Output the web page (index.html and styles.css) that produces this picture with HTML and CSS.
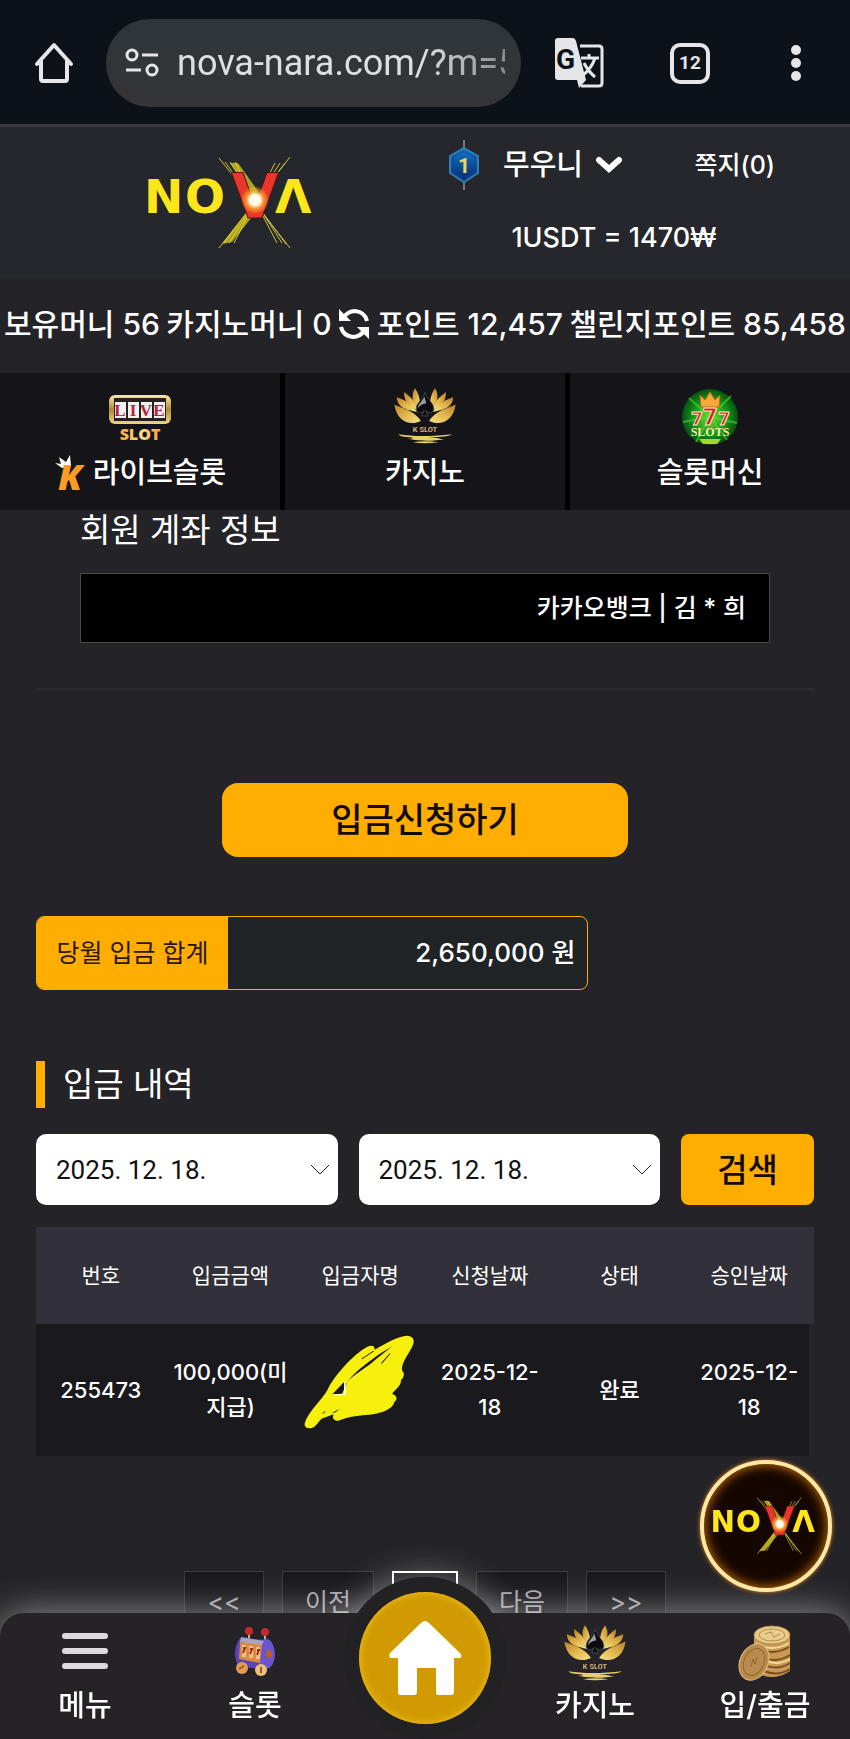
FILE: index.html
```html
<!DOCTYPE html>
<html lang="ko">
<head>
  <meta charset="UTF-8" />
  <meta name="viewport" content="width=device-width, initial-scale=1" />
  <title>NOVA</title>
  <link rel="stylesheet" href="styles.css">
</head>
<body>
  <!-- shared drawings -->
  <svg class="defs" aria-hidden="true">
    <defs>
      <linearGradient id="gold" x1="0" y1="0" x2="1" y2="1">
        <stop offset="0" stop-color="#b9822a" />
        <stop offset="0.5" stop-color="#e3b64c" />
        <stop offset="1" stop-color="#f3e58a" />
      </linearGradient>
      <linearGradient id="goldDown" x1="0" y1="0" x2="0" y2="1">
        <stop offset="0" stop-color="#f8eaa6" />
        <stop offset="0.5" stop-color="#b08a35" />
        <stop offset="1" stop-color="#f0d77c" />
      </linearGradient>
      <linearGradient id="orange" x1="0" y1="0" x2="1" y2="0">
        <stop offset="0" stop-color="#f7a13c" />
        <stop offset="0.5" stop-color="#fbe08a" />
        <stop offset="1" stop-color="#f7a13c" />
      </linearGradient>
      <radialGradient id="spark">
        <stop offset="0" stop-color="#fff" />
        <stop offset="0.4" stop-color="#fff6d8" />
        <stop offset="0.65" stop-color="#ffb02e" stop-opacity="0.7" />
        <stop offset="1" stop-color="#ffd21f" stop-opacity="0" />
      </radialGradient>
      <radialGradient id="green">
        <stop offset="0" stop-color="#7be02b" />
        <stop offset="0.6" stop-color="#139a1c" />
        <stop offset="1" stop-color="#05520f" />
      </radialGradient>
      <linearGradient id="blue" x1="0" y1="0" x2="0" y2="1">
        <stop offset="0" stop-color="#1479c9" />
        <stop offset="1" stop-color="#07256b" />
      </linearGradient>
      <g id="petals" fill="url(#gold)">
        <path d="M1 48C20 58 62 66 80 97C48 112 8 100 1 48Z" />
        <path d="M8 26C42 36 62 54 68 70C42 62 12 62 8 26Z" />
        <path d="M30 11C56 30 68 48 71 66C50 54 28 42 30 11Z" />
        <path d="M62 0C78 22 80 48 74 66C56 46 48 24 62 0Z" />
      </g>
    </defs>
    <symbol id="logo" viewBox="0 0 170 92">
      <g stroke="#c9c53a" stroke-width="1" fill="none">
        <path d="M71 1L142 91M77 5L138 87M82 5L134 86M87 5L129 86" />
        <path d="M142 0L71 91M137 6L76 86M132 6L81 86M127 6L86 86" />
      </g>
      <path d="M99 56L74 87L84 85L104 60M82 6L104 38L110 34L90 6" fill="#e8d71f" opacity="0.7" />
      <g class="logo-text" fill="#fbe61c">
        <text x="-4" y="56">N</text>
        <text x="37" y="56">O</text>
        <text x="127" y="56">Λ</text>
      </g>
      <text class="logo-v" x="107" y="61" text-anchor="middle" fill="#e9352c" stroke="#471512" stroke-width="1">V</text>
      <circle cx="107" cy="43" r="14" fill="url(#spark)" />
    </symbol>
    <symbol id="lotus" viewBox="0 0 184 164">
      <use href="#petals" />
      <use href="#petals" transform="matrix(-1 0 0 1 184 0)" />
      <path d="M92 12C84 36 66 42 66 60C66 74 82 76 89 66L83 82H101L95 66C102 76 118 74 118 60C118 42 100 36 92 12Z" fill="#0c0c10" stroke="#55555c" stroke-width="2" />
      <path d="M90 24C84 38 72 46 71 58C78 48 88 46 96 44Z" fill="#9a9aa4" />
      <text x="92" y="129" font-family="Roboto" font-size="22" font-weight="bold" text-anchor="middle" fill="#d9b37c">K SLOT</text>
      <path d="M13 136C60 144 120 142 172 136C160 146 120 142 100 147C132 144 140 152 150 150C120 158 60 156 40 149C60 150 62 146 40 144C26 144 18 142 13 136Z" fill="#e8cf6a" />
      <path d="M56 160Q92 154 132 160Q92 166 56 160Z" fill="#e8cf6a" />
    </symbol>
  </svg>

  <div class="browser">
    <button class="icon-btn" aria-label="Home">
      <svg width="40" height="42" viewBox="0 0 40 42" fill="none" stroke="#e4e6ea" stroke-width="4" stroke-linejoin="round" stroke-linecap="round">
        <path d="M3 22L20 3L37 22M7 19V37Q7 39 9 39H31Q33 39 33 37V19" />
      </svg>
    </button>
    <div class="url">
      <svg width="34" height="30" viewBox="0 0 34 30" fill="none" stroke="#e4e6ea" stroke-width="3">
        <circle cx="7" cy="7" r="5" /><path d="M17 7H33M1 22H16" /><circle cx="27" cy="22" r="5" />
      </svg>
      <span class="address">nova-nara.com/?m=5</span>
    </div>
    <div class="actions">
      <button class="icon-btn" aria-label="Translate">
        <svg width="50" height="52" viewBox="0 0 50 52">
          <path d="M26 9H45Q48 9 48 12V46Q48 49 45 49H27" fill="none" stroke="#e4e6ea" stroke-width="3" />
          <path d="M4 1H19Q21 1 22 4L32 43L25 51L23 43H4Q1 43 1 40V4Q1 1 4 1Z" fill="#e4e6ea" />
          <text x="2" y="32" font-family="Roboto" font-size="28" font-weight="bold" fill="#0d1118">G</text>
          <path d="M27 21H45M35 17V21M41 21Q38 31 28 39M30 26Q34 34 41 40" fill="none" stroke="#e4e6ea" stroke-width="3" />
        </svg>
      </button>
      <button class="tabs-count" aria-label="Tabs">12</button>
      <button class="icon-btn more" aria-label="More">
        <svg width="12" height="38" viewBox="0 0 12 38" fill="#e4e6ea">
          <circle cx="6" cy="6" r="5" /><circle cx="6" cy="19" r="5" /><circle cx="6" cy="32" r="5" />
        </svg>
      </button>
    </div>
  </div>

  <header class="top">
    <a class="brand" href="#" aria-label="NOVA">
      <svg width="170" height="92"><use href="#logo" /></svg>
    </a>
    <div class="account">
      <div class="account-row">
        <button class="user">
          <svg width="30" height="50" viewBox="0 0 30 50">
            <path d="M15 0V50" stroke="#77797e" stroke-width="2" />
            <path d="M15 8L29 16V33L15 42L1 33V16Z" fill="url(#blue)" stroke="#2c7fae" stroke-width="2" />
            <path d="M15 11L26 17V32L15 39L4 32V17Z" fill="none" stroke="#0a4da0" stroke-width="1" />
            <text x="15" y="33" font-family="Roboto" font-size="21" font-weight="bold" text-anchor="middle" fill="#f1d75c">1</text>
          </svg>
          <span>무우니</span>
          <svg width="28" height="18" viewBox="0 0 28 18" fill="none" stroke="#fff" stroke-width="6" stroke-linecap="round"><path d="M4 4L14 13L24 4" /></svg>
        </button>
        <a class="memo" href="#">쪽지(0)</a>
      </div>
      <div class="rate">1USDT = 1470₩</div>
    </div>
  </header>

  <div class="money">
    <span>보유머니 56</span>
    <span>카지노머니 0</span>
    <button class="icon-btn" aria-label="새로고침">
      <svg width="32" height="32" viewBox="0 0 32 32">
        <path d="M5 10Q10 3 17 3Q27 4 29 13M27 22Q22 29 15 29Q5 28 3 19" fill="none" stroke="#fff" stroke-width="4" />
        <path d="M1 1V13H13Z M31 31V19H19Z" fill="#fff" />
      </svg>
    </button>
    <span>포인트 12,457</span>
    <span>챌린지포인트 85,458</span>
  </div>

  <nav class="games">
    <a href="#">
      <svg width="64" height="56" viewBox="0 0 64 56">
        <rect x="1" y="7" width="62" height="29" rx="6" fill="url(#goldDown)" />
        <rect x="6" y="10" width="52" height="23" fill="#26211d" />
        <path d="M7 14H18V30H7ZM20 14H31V30H20ZM33 14H44V30H33ZM46 14H57V30H46Z" fill="#f4eef0" />
        <g font-family="Liberation Serif" font-size="17" font-weight="bold" text-anchor="middle" fill="#b3203f">
          <text x="12" y="28">L</text><text x="25" y="28">I</text><text x="38" y="28">V</text><text x="51" y="28">E</text>
        </g>
        <text x="32" y="52" font-family="Open Sans" font-size="16" font-weight="800" text-anchor="middle" fill="url(#orange)">SLOT</text>
      </svg>
      <span class="label">
        <svg width="36" height="38" viewBox="0 0 36 38">
          <path d="M8 14L1 9L7 10L5 3L12 8L16 1L17 12Z" fill="#fff" />
          <text x="4" y="36" font-family="Open Sans" font-size="36" font-weight="800" font-style="italic" fill="#fb9b24">K</text>
        </svg>
        라이브슬롯
      </span>
    </a>
    <a href="#">
      <svg width="62" height="56"><use href="#lotus" /></svg>
      <span class="label">카지노</span>
    </a>
    <a href="#">
      <svg width="58" height="58" viewBox="0 0 58 58">
        <circle cx="29" cy="29" r="28" fill="url(#green)" />
        <path d="M29 29L8 10M29 29L50 8M29 29L2 34M29 29L56 35M29 29L15 54M29 29L46 52" stroke="#5ad03a" stroke-width="2" opacity="0.6" />
        <path d="M20 19L19 7L24 12L29 4L34 12L39 7L38 19Z" fill="#f4a93a" stroke="#c46a12" />
        <g font-family="Roboto" font-weight="900" text-anchor="middle" fill="#d8161c" stroke="#fbe7c0">
          <text x="16" y="37" font-size="19">7</text><text x="43" y="37" font-size="19">7</text><text x="29" y="37" font-size="24">7</text>
        </g>
        <text x="29" y="48" font-family="Liberation Serif" font-size="12" font-weight="bold" text-anchor="middle" fill="#ffe9a6">SLOTS</text>
        <path d="M18 51H40L36 56H22Z" fill="#a7d62a" />
      </svg>
      <span class="label">슬롯머신</span>
    </a>
  </nav>

  <main>
    <section class="bank">
      <label for="bank">회원 계좌 정보</label>
      <input id="bank" type="text" value="카카오뱅크 | 김 * 희" readonly>
    </section>

    <button class="apply">입금신청하기</button>

    <div class="sum">
      <span class="sum-label">당월 입금 합계</span>
      <span class="sum-value">2,650,000 원</span>
    </div>

    <h2>입금 내역</h2>

    <form class="search">
      <div class="date">
        <select aria-label="시작일"><option>2025. 12. 18.</option></select>
        <svg width="20" height="12" viewBox="0 0 20 12" fill="none" stroke="#222" stroke-width="1"><path d="M1 1L10 10L19 1" /></svg>
      </div>
      <div class="date">
        <select aria-label="종료일"><option>2025. 12. 18.</option></select>
        <svg width="20" height="12" viewBox="0 0 20 12" fill="none" stroke="#222" stroke-width="1"><path d="M1 1L10 10L19 1" /></svg>
      </div>
      <button type="button">검색</button>
    </form>

    <table>
      <thead>
        <tr><th>번호</th><th>입금금액</th><th>입금자명</th><th>신청날짜</th><th>상태</th><th>승인날짜</th></tr>
      </thead>
      <tbody>
        <tr>
          <td>255473</td>
          <td>100,000(미지급)</td>
          <td class="masked">
            <svg viewBox="560 374 206 282" preserveAspectRatio="none">
              <path d="M563 640C570 600 600 560 606 535C620 490 660 420 682 407Q692 404 692 418C720 390 740 376 752 376Q766 378 763 400C758 425 740 455 742 480Q750 495 740 510C742 525 728 540 724 550Q738 560 728 575C724 600 700 612 670 615C650 618 635 625 624 632Q612 630 616 612L594 625C586 640 580 655 572 654Q562 652 563 640Z" fill="#f7f00c" />
              <path d="M641 515C655 490 680 470 692 450L724 408L700 432C680 455 655 485 641 515ZM628 595L613 608L620 606Z" fill="#1b191d" />
              <path d="M614 552L636 514L640 520L632 550Z" fill="#1b191d" />
              <path d="M668 446L690 422M704 460L720 430M596 610L601 603" stroke="#1b191d" stroke-width="2" />
              <path d="M637 515V553M616 553H637" stroke="#fff" stroke-width="3" fill="none" />
            </svg>
          </td>
          <td>2025-12-18</td>
          <td>완료</td>
          <td>2025-12-18</td>
        </tr>
      </tbody>
    </table>

    <div class="pages">
      <button class="end">&lt;&lt;</button>
      <button>이전</button>
      <button class="current" aria-label="1"></button>
      <button>다음</button>
      <button class="end">&gt;&gt;</button>
    </div>
  </main>

  <a class="float" href="#" aria-label="NOVA">
    <svg width="106" height="58"><use href="#logo" /></svg>
  </a>

  <nav class="bottom">
    <a href="#">
      <svg width="46" height="56" viewBox="0 0 46 56" stroke="#dcd8e0" stroke-width="6" stroke-linecap="round"><path d="M3 11H43M3 26H43M3 41H43" /></svg>
      메뉴
    </a>
    <a href="#">
      <svg width="42" height="56" viewBox="0 0 42 56">
        <path d="M15 8V16M31 9V17" stroke="#b8b0b8" stroke-width="2" />
        <circle cx="15" cy="6" r="4" fill="#c22a2e" /><circle cx="31" cy="7" r="4" fill="#c22a2e" />
        <path d="M6 13Q1 20 1 30Q2 38 5 42L30 44L32 15Z" fill="#5a45b4" />
        <ellipse cx="32" cy="29" rx="9" ry="15" fill="#6a56cc" />
        <path d="M7 12L30 16L27 21L6 17Z" fill="#a8a4c4" />
        <path d="M6 17L28 20L26 38L5 34Z" fill="#d98a45" />
        <path d="M8 20H12V32H8ZM15 21H19V33H15ZM22 22H26V34H22Z" fill="#f1bf85" />
        <path d="M9 23H11L9 28M16 24H18L16 29M23 25H25L23 30" fill="none" stroke="#a02c1c" stroke-width="2" />
        <ellipse cx="35" cy="29" rx="3" ry="4" fill="#b5602c" />
        <circle cx="8" cy="43" r="6" fill="#e79a58" /><circle cx="27" cy="45" r="6" fill="#edc07a" />
        <path d="M5 44L10 41M27 42V48" stroke="#9a5a24" stroke-width="2" />
      </svg>
      슬롯
    </a>
    <a class="home" href="#" aria-label="홈">
      <span class="home-circle">
        <svg width="74" height="76" viewBox="0 0 74 76" fill="#fff">
          <path d="M37 1Q39 1 41 3L72 33Q75 37 72 38H66V72Q66 75 63 75H50Q48 75 48 72V48H29V72Q29 75 26 75H12Q10 75 10 72V38H3Q0 37 2 33L33 3Q35 1 37 1Z" />
        </svg>
      </span>
    </a>
    <a href="#">
      <svg width="62" height="56"><use href="#lotus" /></svg>
      카지노
    </a>
    <a href="#">
      <svg width="54" height="56" viewBox="0 0 54 56">
        <path d="M16 10V46Q34 58 52 46V12Z" fill="#c89a55" />
        <path d="M18 22Q34 32 51 22M20 30Q36 40 52 30M22 38Q38 47 52 38M26 46Q40 52 52 44" fill="none" stroke="#7a4d22" stroke-width="2" />
        <path d="M18 18Q34 28 51 18M26 34Q38 42 52 34" fill="none" stroke="#f2dc9b" stroke-width="2" />
        <ellipse cx="34" cy="10" rx="18" ry="9" fill="#e9cd8c" stroke="#b58a48" />
        <ellipse cx="34" cy="10" rx="13" ry="6" fill="none" stroke="#b58a48" />
        <path d="M27 9L33 7L36 12L42 9" fill="none" stroke="#b58a48" />
        <ellipse cx="16" cy="37" rx="14" ry="19" transform="rotate(25 16 37)" fill="#b98b4c" stroke="#e0bd7c" />
        <ellipse cx="16" cy="37" rx="10" ry="14" transform="rotate(25 16 37)" fill="none" stroke="#94672f" />
        <path d="M13 42L15 34L17 39L19 32" fill="none" stroke="#94672f" />
      </svg>
      입/출금
    </a>
  </nav>
</body>
</html>
```

FILE: styles.css
```css
* {
  box-sizing: border-box;
}
body {
  margin: 0;
  min-height: 100vh;
  background-color: #242327;
  color: #fff;
  font-family: Inter, "Noto Sans CJK KR", sans-serif;
  font-size: 29px;
  font-weight: 500;
  line-height: 36px;
}
a {
  color: inherit;
  text-decoration: none;
}
button, input, select {
  font: inherit;
  color: inherit;
  border: none;
  padding: 0;
  margin: 0;
}
button {
  background: none;
  cursor: pointer;
}
svg {
  display: block;
  flex: none;
}
.defs {
  position: absolute;
  width: 0;
  height: 0;
}
.logo-text {
  font-family: "DejaVu Sans", Inter, sans-serif;
  font-size: 47px;
  font-weight: bold;
}
.logo-v {
  font-family: "DejaVu Sans", Inter, sans-serif;
  font-size: 62px;
  font-weight: bold;
}

/* browser bar */
.browser {
  display: flex;
  align-items: center;
  height: 127px;
  padding: 2px 34px 0;
  background-color: #0d1118;
  border-bottom: 3px solid #3a3c42;
}
.url {
  display: flex;
  align-items: center;
  gap: 18px;
  flex: 1;
  min-width: 0;
  height: 88px;
  margin: 0 33px 0 32px;
  padding: 0 16px 0 19px;
  border-radius: 44px;
  background: linear-gradient(#2e3639, #343438);
}
.address {
  flex: 1;
  overflow: hidden;
  white-space: nowrap;
  font-family: Roboto, sans-serif;
  font-size: 36px;
  font-weight: normal;
  line-height: 44px;
  color: #dde0e3;
  -webkit-mask-image: linear-gradient(to right, #000 75%, rgba(0, 0, 0, 0.5));
  mask-image: linear-gradient(to right, #000 75%, rgba(0, 0, 0, 0.5));
}
.actions {
  display: flex;
  align-items: center;
  gap: 66px;
}
.more {
  display: flex;
  justify-content: center;
  width: 40px;
}
.tabs-count {
  width: 40px;
  height: 41px;
  border: 4px solid #e4e6ea;
  border-radius: 10px;
  color: #e4e6ea;
  font-family: Roboto, sans-serif;
  font-size: 19px;
  font-weight: bold;
  line-height: 20px;
}

/* site header */
.top {
  display: flex;
  height: 152px;
  background-color: #26272c;
}
.brand {
  width: 50%;
  padding: 30px 0 0 148px;
}
.account {
  width: 50%;
  padding-top: 13px;
}
.account-row {
  display: flex;
  align-items: center;
  justify-content: space-between;
  padding: 0 75px 0 24px;
}
.user {
  display: flex;
  align-items: center;
}
.user span {
  margin: 0 12px 0 24px;
}
.memo {
  font-size: 25px;
}
.rate {
  margin-top: 30px;
  padding-right: 47px;
  text-align: center;
  font-size: 27px;
  line-height: 36px;
}
.money {
  display: flex;
  align-items: center;
  justify-content: space-between;
  height: 94px;
  padding: 0 4px 4px;
  font-size: 30px;
  white-space: nowrap;
}
.games {
  display: grid;
  grid-template-columns: repeat(3, 1fr);
  gap: 5px;
  height: 137px;
  background-color: #000;
}
.games a {
  display: flex;
  flex-direction: column;
  align-items: center;
  justify-content: space-between;
  padding: 15px 0 18px;
  background-color: #151418;
}
.label {
  display: flex;
  align-items: center;
  gap: 3px;
  height: 38px;
}

/* deposit page */
main {
  padding: 0 36px;
}
.bank {
  display: flex;
  flex-direction: column;
  padding: 0 44px 45px;
  border-bottom: 2px solid #2c2c31;
}
.bank label {
  font-size: 33px;
  font-weight: normal;
  line-height: 40px;
}
.bank input {
  width: 100%;
  height: 70px;
  margin-top: 23px;
  padding: 0 23px 4px;
  border: 1px solid #48484c;
  background-color: #000;
  font-size: 25px;
  text-align: right;
}
.apply {
  display: block;
  width: 406px;
  height: 74px;
  margin: 93px auto 59px;
  border-radius: 16px;
  background-color: #ffae00;
  color: #120b00;
  font-size: 34px;
}
.sum {
  display: flex;
  align-items: center;
  width: 71%;
  height: 74px;
  border: 1px solid #ffae00;
  border-radius: 8px;
  background-color: #202427;
  font-size: 25px;
  overflow: hidden;
}
.sum-label {
  width: 191px;
  font-weight: normal;
  line-height: 74px;
  text-align: center;
  background-color: #ffae00;
  color: #2b1600;
}
.sum-value {
  flex: 1;
  padding-right: 12px;
  font-size: 26px;
  text-align: right;
}
h2 {
  margin: 71px 0 26px;
  padding-left: 18px;
  border-left: 9px solid #ffae00;
  font-size: 33px;
  font-weight: normal;
  line-height: 47px;
}
.search {
  display: flex;
  gap: 21px;
  margin-bottom: 22px;
}
.date {
  position: relative;
  flex: 1;
}
.date select {
  width: 100%;
  height: 71px;
  padding-left: 20px;
  border-radius: 10px;
  background-color: #fff;
  color: #111;
  font-family: Roboto, sans-serif;
  font-size: 26px;
  font-weight: normal;
  appearance: none;
}
.date svg {
  position: absolute;
  right: 8px;
  top: 30px;
}
.search button {
  width: 133px;
  height: 71px;
  border-radius: 8px;
  background-color: #ffae00;
  color: #120b00;
  font-size: 33px;
}
table {
  width: 100%;
  table-layout: fixed;
  border-collapse: collapse;
  font-size: 21px;
  line-height: 35px;
  text-align: center;
}
th {
  height: 97px;
  padding: 0;
  background-color: #323139;
  font-weight: normal;
}
td {
  height: 132px;
  padding: 0 6px;
  background-color: #1a191d;
  font-size: 22px;
}
td:last-child {
  box-shadow: inset -5px 0 #242327;
}
.masked {
  position: relative;
}
.masked svg {
  position: absolute;
  left: 8px;
  top: 11px;
  width: 112px;
  height: 94px;
}
.pages {
  display: flex;
  justify-content: center;
  gap: 18px;
  margin-top: 115px;
}
.pages button {
  width: 92px;
  height: 62px;
  border: 1px solid #39393e;
  background-color: #18181d;
  color: #a3a3a8;
  font-size: 25px;
  font-weight: normal;
}
.pages .end {
  width: 80px;
}
.pages .current {
  width: 66px;
  border: 2px solid #fff;
}

.float {
  position: fixed;
  right: 18px;
  bottom: 147px;
  z-index: 3;
  display: flex;
  align-items: center;
  justify-content: center;
  width: 132px;
  height: 132px;
  border: 4px solid #ffe9a0;
  border-radius: 50%;
  background-color: #150700;
  box-shadow: 0 0 4px #f08a2c, inset 0 0 12px #e07a10;
}

/* bottom menu */
.bottom {
  position: fixed;
  left: 0;
  right: 0;
  bottom: 0;
  z-index: 2;
  display: grid;
  grid-template-columns: repeat(5, 1fr);
  height: 126px;
  border-radius: 24px 24px 0 0;
  background-color: #252327;
  box-shadow: 0 0 36px rgba(255, 255, 255, 0.5);
}
.bottom a {
  display: flex;
  flex-direction: column;
  align-items: center;
  gap: 7px;
  padding-top: 12px;
}
.bottom .home {
  position: relative;
}
/* glow of the raised circle, only above the bar */
.home::before {
  content: "";
  position: absolute;
  top: -36px;
  width: 162px;
  height: 162px;
  border-radius: 50%;
  box-shadow: 0 0 36px rgba(255, 255, 255, 0.4);
  clip-path: inset(-40px -40px 126px -40px);
}
.home-circle {
  position: absolute;
  top: -36px;
  display: flex;
  align-items: center;
  justify-content: center;
  width: 162px;
  height: 162px;
  border: 15px solid #222124;
  border-radius: 50%;
  background-color: #222124;
}
.home-circle::before {
  content: "";
  position: absolute;
  inset: 0;
  border-radius: 50%;
  background-color: #d09a00;
  box-shadow: inset 0 0 8px #f5c420;
}
.home-circle svg {
  position: relative;
}
```
